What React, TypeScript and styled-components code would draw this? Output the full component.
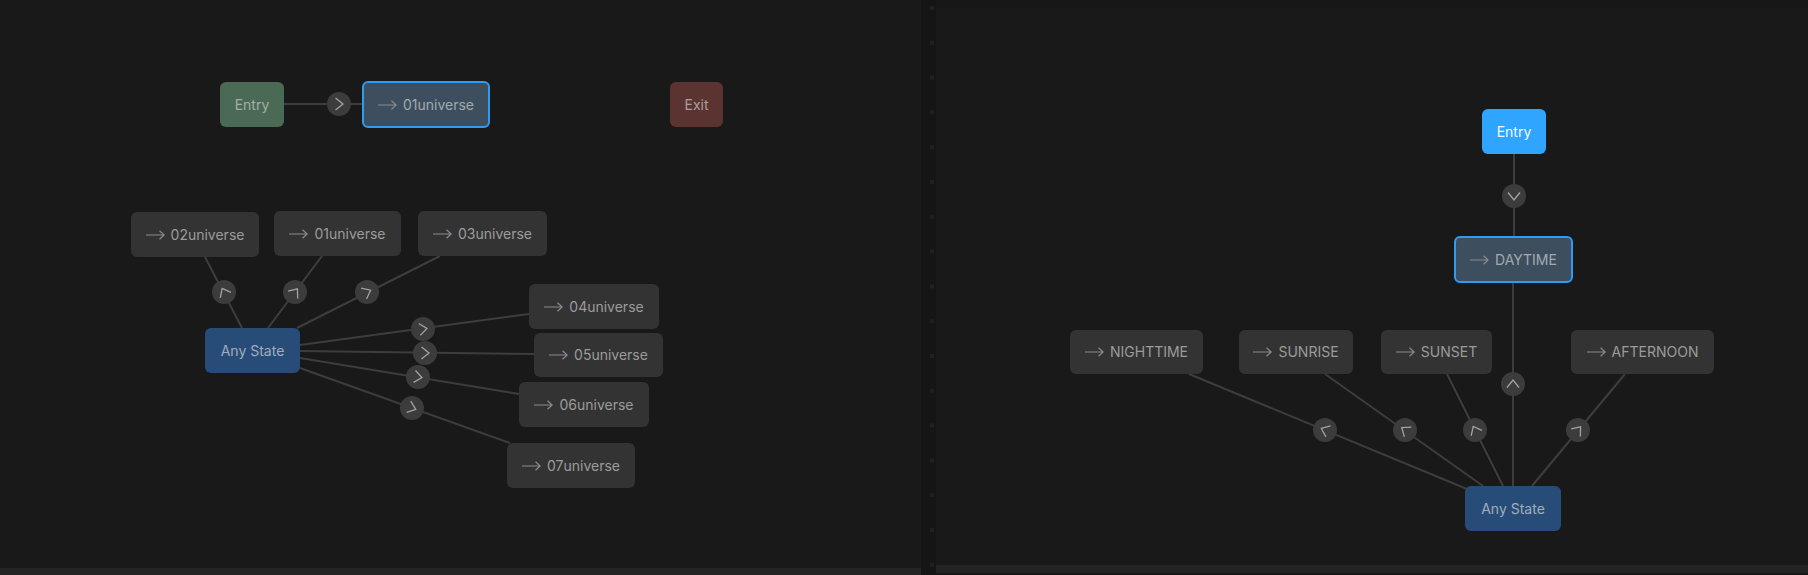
import React from "react";
import styled, { createGlobalStyle } from "styled-components";

const GlobalStyle = createGlobalStyle`
  html, body {
    margin: 0;
    padding: 0;
    background: #191919;
  }
  body {
    font-family: Inter, "Noto Sans", sans-serif;
  }
`;

const Page = styled.div`
  display: flex;
  width: 1808px;
  height: 575px;
  overflow: hidden;
  background: #191919;
`;

const Panel = styled.div<{ $top: number; $bottom: number; $width?: number }>`
  display: flex;
  flex-direction: column;
  flex: ${(p) => (p.$width ? `0 0 ${p.$width}px` : "1 1 0")};
  padding-top: ${(p) => p.$top}px;
  padding-bottom: ${(p) => p.$bottom}px;
  box-sizing: border-box;
  background: ${(p) => (p.$top ? "#171717" : "#191919")};
`;

const Canvas = styled.div`
  position: relative;
  flex: 1;
  background: #191919;
`;

const ScrollBar = styled.div<{ $height: number }>`
  flex: 0 0 ${(p) => p.$height}px;
  background: #242424;
`;

const Divider = styled.div`
  flex: 0 0 15px;
  background-color: #151515;
  background-image: linear-gradient(#202020, #202020);
  background-repeat: repeat-y;
  background-size: 4px 4px;
  background-position: 9px 6px;
  background-size: 4px 34.8px;
  background-image: linear-gradient(#202020 4px, transparent 4px);
`;

const Edges = styled.svg`
  position: absolute;
  left: 0;
  top: 0;
  width: 100%;
  height: 100%;
  overflow: visible;
`;

type Kind = "state" | "selected" | "entry" | "entryActive" | "exit" | "any";

const kindStyles: Record<Kind, string> = {
  state: "background:#333333;color:#9b9b9b;",
  selected: "background:#3d4f5f;color:#a3a9ae;border:2px solid #2e9cf2;",
  entry: "background:#4a6a56;color:#a2aea6;",
  entryActive: "background:#2fa5ff;color:#f4f9ff;",
  exit: "background:#5b3331;color:#aa9e9d;",
  any: "background:#284c78;color:#a2adba;",
};

const Node = styled.div.attrs<{ $x: number; $y: number; $w: number; $h: number }>((p) => ({
  style: { left: p.$x, top: p.$y, width: p.$w, height: p.$h },
}))<{ $x: number; $y: number; $w: number; $h: number; $kind: Kind }>`
  position: absolute;
  display: flex;
  align-items: center;
  justify-content: center;
  gap: 6px;
  box-sizing: border-box;
  border-radius: 6px;
  font-size: 14px;
  line-height: 1;
  white-space: nowrap;
  ${(p) => kindStyles[p.$kind]}
`;

const ArrowIcon = styled.svg`
  flex: none;
  width: 19px;
  height: 10px;
  fill: none;
  stroke: #8b8b8b;
  stroke-width: 1.2;
`;

type NodeData = { label: string; x1: number; y1: number; x2: number; y2: number; kind: Kind };
type EdgeData = { from: [number, number]; to: [number, number]; dot: [number, number]; towards?: boolean };

// page coordinates, the graph below shifts them into its canvas
const leftNodes: NodeData[] = [
  { label: "Entry", x1: 220, y1: 82, x2: 284, y2: 127, kind: "entry" },
  { label: "01universe", x1: 362, y1: 81, x2: 490, y2: 128, kind: "selected" },
  { label: "Exit", x1: 670, y1: 82, x2: 723, y2: 127, kind: "exit" },
  { label: "02universe", x1: 131, y1: 212, x2: 259, y2: 257, kind: "state" },
  { label: "01universe", x1: 274, y1: 211, x2: 401, y2: 256, kind: "state" },
  { label: "03universe", x1: 418, y1: 211, x2: 547, y2: 256, kind: "state" },
  { label: "Any State", x1: 205, y1: 328, x2: 300, y2: 373, kind: "any" },
  { label: "04universe", x1: 529, y1: 284, x2: 659, y2: 329, kind: "state" },
  { label: "05universe", x1: 534, y1: 333, x2: 663, y2: 377, kind: "state" },
  { label: "06universe", x1: 519, y1: 382, x2: 649, y2: 427, kind: "state" },
  { label: "07universe", x1: 507, y1: 443, x2: 635, y2: 488, kind: "state" },
];

const leftEdges: EdgeData[] = [
  { from: [284, 104], to: [362, 104], dot: [339, 104] },
  { from: [242, 328], to: [205, 257], dot: [224, 292] },
  { from: [268, 328], to: [322, 256], dot: [295, 292] },
  { from: [297, 328], to: [440, 256], dot: [367, 292] },
  { from: [300, 345], to: [529, 314], dot: [423, 329] },
  { from: [300, 351], to: [534, 354], dot: [425, 353] },
  { from: [300, 358], to: [519, 394], dot: [418, 377] },
  { from: [300, 368], to: [510, 443], dot: [412, 408] },
];

const rightNodes: NodeData[] = [
  { label: "Entry", x1: 1482, y1: 109, x2: 1546, y2: 154, kind: "entryActive" },
  { label: "DAYTIME", x1: 1454, y1: 236, x2: 1573, y2: 283, kind: "selected" },
  { label: "NIGHTTIME", x1: 1070, y1: 330, x2: 1203, y2: 374, kind: "state" },
  { label: "SUNRISE", x1: 1239, y1: 330, x2: 1353, y2: 374, kind: "state" },
  { label: "SUNSET", x1: 1381, y1: 330, x2: 1492, y2: 374, kind: "state" },
  { label: "AFTERNOON", x1: 1571, y1: 330, x2: 1714, y2: 374, kind: "state" },
  { label: "Any State", x1: 1465, y1: 486, x2: 1561, y2: 531, kind: "any" },
];

const rightEdges: EdgeData[] = [
  { from: [1514, 154], to: [1514, 236], dot: [1514, 196] },
  { from: [1513, 486], to: [1513, 283], dot: [1513, 384] },
  { from: [1467, 489], to: [1189, 374], dot: [1325, 430] },
  { from: [1483, 486], to: [1325, 374], dot: [1405, 430] },
  { from: [1503, 486], to: [1447, 374], dot: [1475, 430] },
  { from: [1532, 486], to: [1625, 374], dot: [1578, 430] },
];

const names = ["Entry", "Exit", "Any State"];

function Graph({ nodes, edges, originX, originY }: { nodes: NodeData[]; edges: EdgeData[]; originX: number; originY: number }) {
  return (
    <Canvas>
      <Edges>
        <g transform={`translate(${-originX} ${-originY})`}>
          {edges.map((e, i) => {
            const angle = (Math.atan2(e.to[1] - e.from[1], e.to[0] - e.from[0]) * 180) / Math.PI;
            return (
              <g key={i}>
                <line x1={e.from[0]} y1={e.from[1]} x2={e.to[0]} y2={e.to[1]} stroke="#3d3d3d" strokeWidth="2" />
                <circle cx={e.dot[0]} cy={e.dot[1]} r="12" fill="#3c3c3c" />
                <path
                  d="M-3.5 -6 L4 0 L-3.5 6"
                  transform={`translate(${e.dot[0]} ${e.dot[1]}) rotate(${angle})`}
                  fill="none"
                  stroke="#a3a3a3"
                  strokeWidth="1.3"
                />
              </g>
            );
          })}
        </g>
      </Edges>
      {nodes.map((n, i) => (
        <Node key={i} $x={n.x1 - originX} $y={n.y1 - originY} $w={n.x2 - n.x1} $h={n.y2 - n.y1} $kind={n.kind}>
          {!names.includes(n.label) && (
            <ArrowIcon viewBox="0 0 19 10">
              <path d="M0 5 H18 M13.5 0.8 L18.2 5 L13.5 9.2" />
            </ArrowIcon>
          )}
          {n.label}
        </Node>
      ))}
    </Canvas>
  );
}

export default function App(): JSX.Element {
  return (
    <Page>
      <GlobalStyle />
      <Panel $top={0} $bottom={0} $width={921}>
        <Graph nodes={leftNodes} edges={leftEdges} originX={0} originY={0} />
        <ScrollBar $height={7} />
      </Panel>
      <Divider />
      <Panel $top={8} $bottom={2}>
        <Graph nodes={rightNodes} edges={rightEdges} originX={936} originY={8} />
        <ScrollBar $height={8} />
      </Panel>
    </Page>
  );
}
